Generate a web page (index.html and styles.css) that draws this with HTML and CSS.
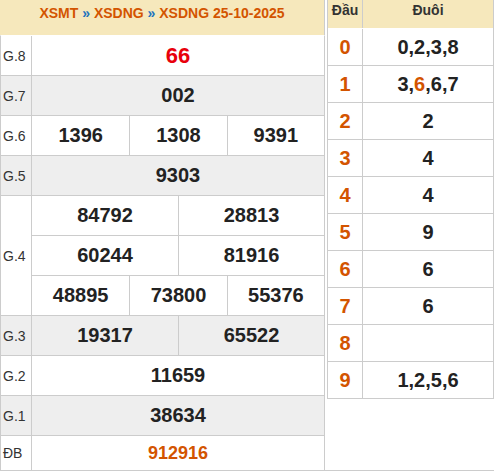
FILE: index.html
```html
<!DOCTYPE html>
<html lang="vi">
<head>
<meta charset="utf-8">
<title>XSDNG 25-10-2025</title>
<link rel="stylesheet" href="styles.css">
</head>
<body>
<div class="board">
  <div class="results">
    <div class="results-head">XSMT <span class="sep">»</span> XSDNG <span class="sep">»</span> XSDNG 25-10-2025</div>

    <div class="prize-row first">
      <div class="label">G.8</div>
      <div class="nums cols-1"><span class="num g8">66</span></div>
    </div>
    <div class="prize-row alt">
      <div class="label">G.7</div>
      <div class="nums cols-1"><span class="num">002</span></div>
    </div>
    <div class="prize-row">
      <div class="label">G.6</div>
      <div class="nums cols-3"><span class="num">1396</span><span class="num">1308</span><span class="num">9391</span></div>
    </div>
    <div class="prize-row alt">
      <div class="label">G.5</div>
      <div class="nums cols-1"><span class="num">9303</span></div>
    </div>
    <div class="prize-row tall">
      <div class="label">G.4</div>
      <div class="stack">
        <div class="nums cols-2 sub"><span class="num">84792</span><span class="num">28813</span></div>
        <div class="nums cols-2 sub"><span class="num">60244</span><span class="num">81916</span></div>
        <div class="nums cols-3 sub"><span class="num">48895</span><span class="num">73800</span><span class="num">55376</span></div>
      </div>
    </div>
    <div class="prize-row alt">
      <div class="label">G.3</div>
      <div class="nums cols-2"><span class="num">19317</span><span class="num">65522</span></div>
    </div>
    <div class="prize-row">
      <div class="label">G.2</div>
      <div class="nums cols-1"><span class="num">11659</span></div>
    </div>
    <div class="prize-row alt">
      <div class="label">G.1</div>
      <div class="nums cols-1"><span class="num">38634</span></div>
    </div>
    <div class="prize-row last">
      <div class="label">ĐB</div>
      <div class="nums cols-1"><span class="num db">912916</span></div>
    </div>
  </div>

  <div class="loto">
    <div class="loto-head">
      <div class="dau">Đầu</div>
      <div class="duoi">Đuôi</div>
    </div>
    <div class="loto-row first"><div class="dau">0</div><div class="duoi">0,2,3,8</div></div>
    <div class="loto-row"><div class="dau">1</div><div class="duoi">3,<span class="hl">6</span>,6,7</div></div>
    <div class="loto-row"><div class="dau">2</div><div class="duoi">2</div></div>
    <div class="loto-row"><div class="dau">3</div><div class="duoi">4</div></div>
    <div class="loto-row"><div class="dau">4</div><div class="duoi">4</div></div>
    <div class="loto-row"><div class="dau">5</div><div class="duoi">9</div></div>
    <div class="loto-row"><div class="dau">6</div><div class="duoi">6</div></div>
    <div class="loto-row"><div class="dau">7</div><div class="duoi">6</div></div>
    <div class="loto-row"><div class="dau">8</div><div class="duoi"></div></div>
    <div class="loto-row"><div class="dau">9</div><div class="duoi">1,2,5,6</div></div>
  </div>
</div>
</body>
</html>
```

FILE: styles.css
```css
* {
  box-sizing: border-box;
}

html, body {
  margin: 0;
  padding: 0;
  background: #fff;
}

body {
  font-family: "Liberation Sans", Arial, sans-serif;
  color: #222;
}

.board {
  display: flex;
  align-items: flex-start;
  gap: 2px;
  width: 494px;
  height: 471px;
  border-bottom: 1px solid #ccc;
}

/* ---------- Results table ---------- */
.results {
  width: 325px;
  display: flex;
  flex-direction: column;
}

.results-head {
  height: 35px;
  padding-top: 5px;
  line-height: 16px;
  background: #f6e8bc;
  border-right: 1px solid #ccc;
  text-align: center;
  font-size: 14px;
  font-weight: bold;
  color: #d35400;
}

.results-head .sep {
  color: #1e73be;
}

.prize-row {
  display: flex;
  height: 40px;
  border-left: 1px solid #ccc;
  border-right: 1px solid #ccc;
  border-top: 1px solid #ccc;
  background: #fff;
}

.prize-row.first {
  border-top-color: #fff;
}

.prize-row.alt {
  background: #eee;
}

.prize-row.tall {
  height: 120px;
}

.prize-row.last {
  height: 35px;
}

.label {
  width: 31px;
  flex: none;
  display: flex;
  align-items: center;
  padding-left: 2px;
  border-right: 1px solid #ccc;
  font-size: 14px;
  color: #333;
}

.stack {
  flex: 1;
  display: flex;
  flex-direction: column;
}

.nums {
  flex: 1;
  display: grid;
}

.stack .sub {
  flex: none;
  height: 40px;
  border-top: 1px solid #ccc;
}

.stack .sub:first-child {
  height: 39px;
  border-top: none;
}

.cols-1 { grid-template-columns: 1fr; }
.cols-2 { grid-template-columns: 1fr 1fr; }
.cols-3 { grid-template-columns: 1fr 1fr 1fr; }

.num {
  display: flex;
  align-items: center;
  justify-content: center;
  font-size: 20px;
  font-weight: bold;
  color: #222;
}

.num + .num {
  border-left: 1px solid #ccc;
}

.num.g8 {
  font-size: 22px;
  color: #e8000b;
}

.num.db {
  font-size: 18px;
  color: #d35400;
}

/* ---------- Loto table ---------- */
.loto {
  width: 167px;
  display: flex;
  flex-direction: column;
  border-left: 1px solid #ccc;
  border-right: 1px solid #ccc;
  border-bottom: 1px solid #ccc;
}

.loto-head {
  display: flex;
  height: 28px;
  background: #f6e8bc;
  font-size: 14px;
  font-weight: bold;
  color: #333;
  line-height: 16px;
}

.loto-head .dau,
.loto-head .duoi {
  padding-top: 2px;
  text-align: center;
}

.loto-row {
  display: flex;
  height: 37px;
  border-top: 1px solid #ccc;
  font-size: 20px;
  font-weight: bold;
}

.loto-row.first {
  border-top-color: #fff;
}

.dau {
  width: 35px;
  flex: none;
  border-right: 1px solid #ccc;
}

.duoi {
  flex: 1;
}

.loto-row .dau,
.loto-row .duoi {
  display: flex;
  align-items: center;
  justify-content: center;
}

.loto-row .dau {
  color: #d35400;
}

.loto-row .duoi {
  color: #222;
}

.duoi .hl {
  color: #d35400;
}
```
